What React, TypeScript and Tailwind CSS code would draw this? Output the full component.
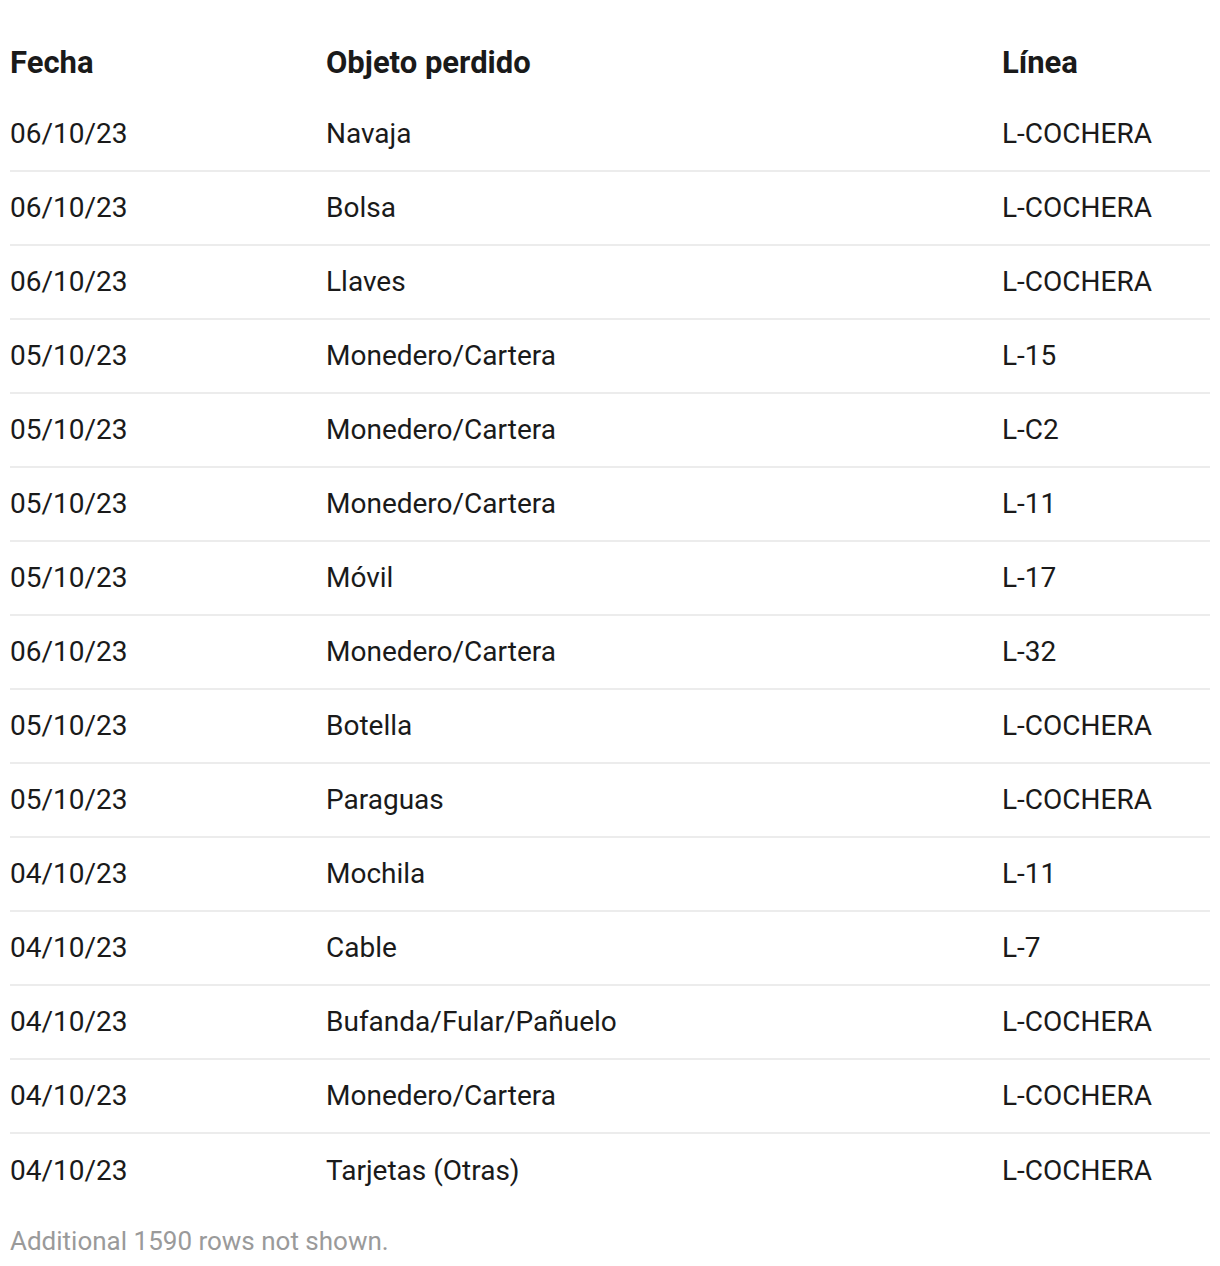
import React from "react";

const rows: [string, string, string][] = [
  ["06/10/23", "Navaja", "L-COCHERA"],
  ["06/10/23", "Bolsa", "L-COCHERA"],
  ["06/10/23", "Llaves", "L-COCHERA"],
  ["05/10/23", "Monedero/Cartera", "L-15"],
  ["05/10/23", "Monedero/Cartera", "L-C2"],
  ["05/10/23", "Monedero/Cartera", "L-11"],
  ["05/10/23", "Móvil", "L-17"],
  ["06/10/23", "Monedero/Cartera", "L-32"],
  ["05/10/23", "Botella", "L-COCHERA"],
  ["05/10/23", "Paraguas", "L-COCHERA"],
  ["04/10/23", "Mochila", "L-11"],
  ["04/10/23", "Cable", "L-7"],
  ["04/10/23", "Bufanda/Fular/Pañuelo", "L-COCHERA"],
  ["04/10/23", "Monedero/Cartera", "L-COCHERA"],
  ["04/10/23", "Tarjetas (Otras)", "L-COCHERA"],
];

export default function App() {
  return (
    <div className="w-[1220px] min-h-[1266px] bg-white pl-[10px] pt-[29px] text-[#1a1a1a] [font-family:Roboto,'Liberation_Sans',sans-serif]">
      <div className="w-[1200px]">
        <div className="grid grid-cols-[316px_676px_1fr] h-[69px] items-center text-[31px] font-bold">
          <div>Fecha</div>
          <div>Objeto perdido</div>
          <div>Línea</div>
        </div>
        {rows.map((r, i) => (
          <div
            key={i}
            className={
              "grid grid-cols-[316px_676px_1fr] items-center text-[28px] " +
              (i < rows.length - 1 ? "h-[74px] border-b-2 border-[#ececec]" : "h-[74px]")
            }
          >
            <div>{r[0]}</div>
            <div>{r[1]}</div>
            <div>{r[2]}</div>
          </div>
        ))}
        <div className="h-[66px] flex items-center text-[26px] text-[#9a9a9a]">
          Additional 1590 rows not shown.
        </div>
      </div>
    </div>
  );
}
